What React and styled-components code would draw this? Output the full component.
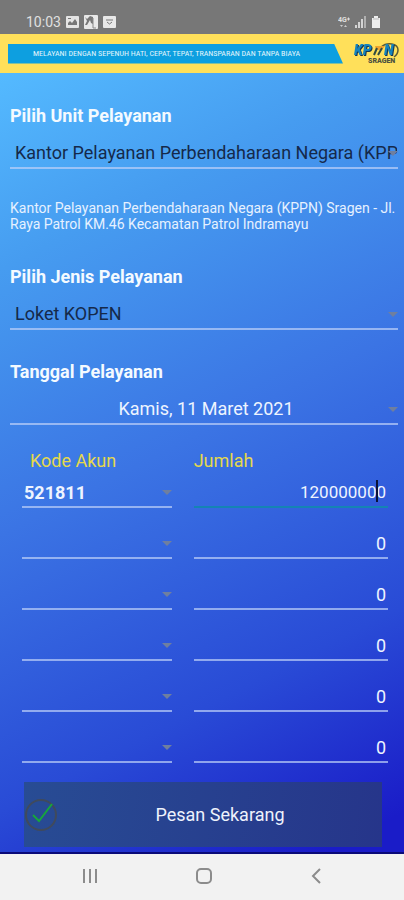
import React from 'react'
import styled, { createGlobalStyle } from 'styled-components'

const GlobalStyle = createGlobalStyle`
  *, *::before, *::after {
    box-sizing: border-box;
  }

  body {
    margin: 0;
    font-family: Roboto, 'Liberation Sans', sans-serif;
  }

  input, select, button {
    font-family: inherit;
  }
`

const Screen = styled.div`
  min-height: 100vh;
  display: flex;
  flex-direction: column;
`

const StatusBar = styled.header`
  display: flex;
  align-items: center;
  justify-content: space-between;
  height: 34px;
  padding: 9px 24px 0 26px;
  background: #777777;
  color: #e0e0e0;
`

const StatusGroup = styled.div`
  display: flex;
  align-items: center;
  gap: 5px;
`

const Time = styled.time`
  font-size: 14px;
  line-height: 18px;
`

const Banner = styled.div`
  display: flex;
  align-items: center;
  justify-content: space-between;
  height: 39px;
  padding: 0 4px 0 8px;
  background: #ffe05a;
`

const Motto = styled.p`
  flex: 1;
  max-width: 335px;
  margin: 0;
  padding-left: 25px;
  background: #0d9fe0;
  clip-path: polygon(0 0, calc(100% - 9px) 0, 100% 100%, 0 100%);
  color: #e4f6fc;
  font-family: 'Roboto Condensed', 'Liberation Sans Narrow', Roboto, sans-serif;
  font-size: 8px;
  line-height: 20px;
  white-space: nowrap;
`

const Form = styled.form`
  flex: 1;
  padding: 32px 6px 5px 10px;
  background: linear-gradient(153deg, #54baff 0%, #469cf0 20%, #3b74e4 47%, #294bd6 75%, #1a1cc8 96%);
  border-bottom: 2px solid #0a0a78;
`

const Label = styled.label`
  display: block;
  color: #f4faff;
  font-size: 18px;
  font-weight: 700;
  line-height: 22px;
`

const Field = styled.div`
  margin-bottom: ${({ $gap }) => $gap || 0}px;
`

const Control = styled.div`
  position: relative;
  border-bottom: 2px solid ${({ $active }) => ($active ? '#1583b4' : 'rgba(190, 208, 248, 0.7)')};
`

const Select = styled.select`
  display: block;
  appearance: none;
  width: 100%;
  height: ${({ $small }) => ($small ? 30 : 40)}px;
  padding: ${({ $small }) => ($small ? '2px 20px 0 2px' : '11px 1px 0 5px')};
  border: 0;
  border-radius: 0;
  outline: 0;
  background: transparent;
  color: ${({ $light }) => ($light ? '#eef4ff' : '#15294a')};
  font-size: 18px;
  font-weight: ${({ $small }) => ($small ? 700 : 400)};
  text-align-last: ${({ $center }) => ($center ? 'center' : 'left')};
`

const Arrow = styled.svg`
  position: absolute;
  right: 0;
  bottom: 10px;
  width: 10px;
  height: 6px;
  fill: #6f7f9f;
  pointer-events: none;
`

const Address = styled.p`
  margin: 0 0 34px;
  color: #e6f1ff;
  font-size: 14px;
  line-height: 16px;
`

const Accounts = styled.table`
  width: calc(100% - 10px);
  margin-top: 24px;
  border-collapse: collapse;
  table-layout: fixed;

  th {
    height: 25px;
    padding: 0 0 0 20px;
    color: #e6d84c;
    font-size: 18px;
    font-weight: 400;
    line-height: 24px;
    text-align: left;
    vertical-align: top;
  }

  th + th {
    padding-left: 6px;
  }

  td {
    height: 51px;
    padding: 0 16px 0 12px;
    vertical-align: bottom;
  }

  td + td {
    padding: 0 0 0 6px;
  }

  tbody tr:first-child td {
    height: 34px;
  }
`

const CodeColumn = styled.col`
  width: 47%;
`

const Amount = styled.input`
  display: block;
  width: 100%;
  height: 30px;
  padding: 2px 2px 0;
  border: 0;
  outline: 0;
  background: transparent;
  color: #eef4ff;
  font-size: ${({ $long }) => ($long ? 17 : 18)}px;
  text-align: right;
`

const Caret = styled.span`
  position: absolute;
  right: 10px;
  bottom: 4px;
  width: 2px;
  height: 22px;
  background: #0a1238;
`

const Submit = styled.button`
  display: flex;
  align-items: center;
  width: calc(100% - 30px);
  height: 65px;
  margin: 19px 16px 0 14px;
  padding: 0;
  border: 0;
  background: linear-gradient(100deg, #284c94, #26358a);
  color: #eef2fc;
  font-size: 18px;

  span {
    flex: 1;
  }
`

const NavBar = styled.nav`
  display: flex;
  align-items: center;
  justify-content: space-between;
  height: 47px;
  padding: 0 80px 4px;
  background: #f2f2f2;
`

const NavButton = styled.button`
  display: flex;
  padding: 0;
  border: 0;
  background: none;
`

const LogoSvg = styled.svg`
  flex: none;
  font-family: Roboto, sans-serif;
  font-weight: 900;
`

const LogoLetters = styled.g`
  fill: #1583bd;
  font-size: 14px;
  font-style: italic;
  filter: drop-shadow(1px 1px 0 #17374f);
`

const PictureIcon = () => (
  <svg width="13" height="12" viewBox="0 0 13 12" aria-hidden="true">
    <rect width="13" height="12" rx="1" fill="#e4e4e4" />
    <path d="M2 9V7l2-2 2 2 3-4 2 3v3z" fill="#777" />
    <path d="M2 2h3v1H2z" fill="#777" />
  </svg>
)

const MapIcon = () => (
  <svg width="14" height="14" viewBox="0 0 14 14" aria-hidden="true">
    <rect width="14" height="14" rx="1" fill="#e8e8e8" />
    <path d="M1 2l2 2 3-3 3 1v7l-2-1-1-3-3 5H1l2-4z" fill="#777" />
    <path d="M9 3v10h3" stroke="#888" fill="none" />
  </svg>
)

const InboxIcon = () => (
  <svg width="13" height="12" viewBox="0 0 13 12" aria-hidden="true">
    <rect width="13" height="12" rx="1" fill="#e8e8e8" />
    <path d="M3 4h7M4 6l2.500 2L9 6" stroke="#777" fill="none" />
  </svg>
)

const NetworkIcon = () => (
  <svg width="12" height="13" viewBox="0 0 12 13" aria-hidden="true">
    <text x="0" y="7" fontSize="7" fontWeight="700" fill="#e0e0e0">4G</text>
    <path d="M9 4h3M10.500 2.500v3" stroke="#ddd" fill="none" />
    <path d="M2 10h3l-1.500 2zM6 12h3l-1.500-2z" fill="#ccc" />
  </svg>
)

const SignalIcon = () => (
  <svg width="12" height="12" viewBox="0 0 12 12" aria-hidden="true">
    <path d="M0 9h2v3H0zM3 6h2v6H3zM6 3h2v9H6z" fill="#d4d4d4" />
    <path d="M9 0h2v12H9z" fill="#b0b0b0" />
  </svg>
)

const BatteryIcon = () => (
  <svg width="8" height="12" viewBox="0 0 8 12" aria-hidden="true">
    <path d="M2 0h4v2h2v10H0V2h2z" fill="#eeeeee" />
    <path d="M1 3h6" stroke="#bbb" />
  </svg>
)

const Logo = () => (
  <LogoSvg width="46" height="24" viewBox="0 0 46 24" role="img" aria-label="KPPN Sragen">
    <path d="M27 5C33 0 44 1 44 8c0 3-1 5-4 7" fill="none" stroke="#5c5a34" strokeWidth="1.500" />
    <LogoLetters>
      <text x="0" y="13">KP</text>
      <text x="30" y="13">N</text>
    </LogoLetters>
    <path d="M21 4h10l-3 4h-6z" fill="#f0a22c" />
    <path d="M23 6l-3 7M28 6l-4 7" stroke="#324c42" strokeWidth="2" />
    <text x="14" y="21" fontSize="7" fill="#4d5140">SRAGEN</text>
  </LogoSvg>
)

const CheckIcon = () => (
  <svg width="34" height="34" viewBox="0 0 34 34" aria-hidden="true">
    <circle cx="17" cy="17" r="15" fill="none" stroke="#404a5c" strokeWidth="2" />
    <path d="M9 17l6 6L28 6" fill="none" stroke="#16a63c" strokeWidth="2" />
  </svg>
)

const DropArrow = () => (
  <Arrow viewBox="0 0 10 6" aria-hidden="true">
    <path d="M0 0h10L5 5z" />
  </Arrow>
)

const accounts = [
  { code: '521811', amount: '120000000' },
  { code: '', amount: '0' },
  { code: '', amount: '0' },
  { code: '', amount: '0' },
  { code: '', amount: '0' },
  { code: '', amount: '0' },
]

const App = () => {
  return (
    <Screen>
      <GlobalStyle />
      <StatusBar>
        <StatusGroup>
          <Time>10:03</Time>
          <PictureIcon />
          <MapIcon />
          <InboxIcon />
        </StatusGroup>
        <StatusGroup>
          <NetworkIcon />
          <SignalIcon />
          <BatteryIcon />
        </StatusGroup>
      </StatusBar>
      <Banner>
        <Motto>MELAYANI DENGAN SEPENUH HATI, CEPAT, TEPAT, TRANSPARAN DAN TANPA BIAYA</Motto>
        <Logo />
      </Banner>

      <Form onSubmit={e => e.preventDefault()}>
        <Field $gap={31}>
          <Label htmlFor="unit">Pilih Unit Pelayanan</Label>
          <Control>
            <Select id="unit">
              <option>Kantor Pelayanan Perbendaharaan Negara (KPPN) Sragen</option>
            </Select>
            <DropArrow />
          </Control>
        </Field>
        <Address>
          Kantor Pelayanan Perbendaharaan Negara (KPPN) Sragen - Jl. Raya Patrol KM.46 Kecamatan Patrol Indramayu
        </Address>
        <Field $gap={31}>
          <Label htmlFor="service">Pilih Jenis Pelayanan</Label>
          <Control>
            <Select id="service">
              <option>Loket KOPEN</option>
            </Select>
            <DropArrow />
          </Control>
        </Field>
        <Field>
          <Label htmlFor="date">Tanggal Pelayanan</Label>
          <Control>
            <Select id="date" $light $center>
              <option>Kamis, 11 Maret 2021</option>
            </Select>
            <DropArrow />
          </Control>
        </Field>

        <Accounts>
          <colgroup>
            <CodeColumn />
            <col />
          </colgroup>
          <thead>
            <tr>
              <th scope="col">Kode Akun</th>
              <th scope="col">Jumlah</th>
            </tr>
          </thead>
          <tbody>
            {accounts.map(({ code, amount }, i) => (
              <tr key={i}>
                <td>
                  <Control>
                    <Select $small $light aria-label={`Kode Akun ${i + 1}`}>
                      <option>{code}</option>
                    </Select>
                    <DropArrow />
                  </Control>
                </td>
                <td>
                  <Control $active={i === 0}>
                    <Amount
                      $long={amount.length > 8}
                      inputMode="numeric"
                      defaultValue={amount}
                      aria-label={`Jumlah ${i + 1}`}
                    />
                    {i === 0 && <Caret />}
                  </Control>
                </td>
              </tr>
            ))}
          </tbody>
        </Accounts>

        <Submit type="submit">
          <CheckIcon />
          <span>Pesan Sekarang</span>
        </Submit>
      </Form>

      <NavBar>
        <NavButton type="button" aria-label="Recents">
          <svg width="20" height="16" viewBox="0 0 20 16">
            <path d="M4 1v14M10 1v14M16 1v14" stroke="#8c8c8c" strokeWidth="2" />
          </svg>
        </NavButton>
        <NavButton type="button" aria-label="Home">
          <svg width="18" height="18" viewBox="0 0 18 18">
            <rect x="2" y="2" width="14" height="14" rx="4" fill="none" stroke="#8c8c8c" strokeWidth="2" />
          </svg>
        </NavButton>
        <NavButton type="button" aria-label="Back">
          <svg width="16" height="16" viewBox="0 0 16 16">
            <path d="M12 1L5 8l7 7" fill="none" stroke="#8c8c8c" strokeWidth="2" />
          </svg>
        </NavButton>
      </NavBar>
    </Screen>
  )
}

export default App
